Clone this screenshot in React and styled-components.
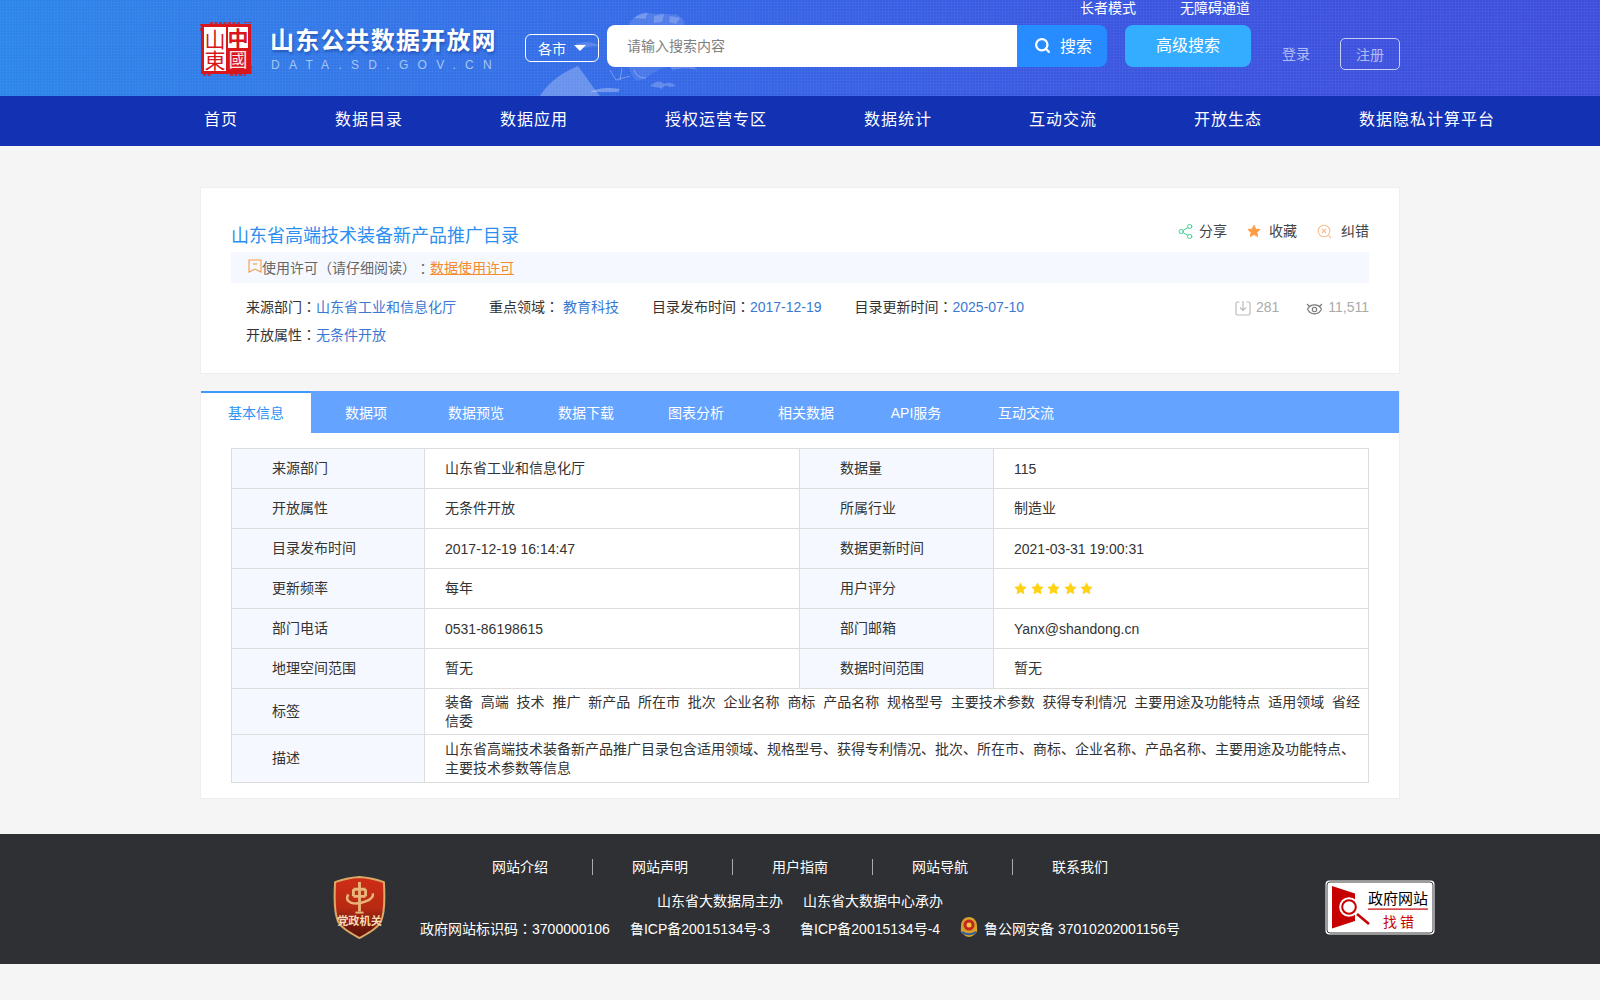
import React from "react";
import styled, { createGlobalStyle } from "styled-components";
import { Share2, Search } from "lucide-react";

const FONT = `"Liberation Sans", "Noto Sans CJK SC", sans-serif`;

const Global = createGlobalStyle`
  html, body { margin: 0; padding: 0; background: #f5f5f5; }
  body { font-family: ${FONT}; font-size: 14px; color: #333; min-height: 1000px; text-spacing-trim: space-all; }
  * { box-sizing: border-box; }
  a { text-decoration: none; color: inherit; }
`;

const Colon = styled.span`
  font-family: "Noto Sans CJK TC", sans-serif;
  line-height: 0;
`;

const HeaderShell = styled.header`
  position: relative;
  height: 96px;
  overflow: hidden;
  background-color: #3a6be6;
  background-image:
    repeating-linear-gradient(0deg, rgba(255,255,255,.035) 0 1px, transparent 1px 3px),
    repeating-linear-gradient(90deg, rgba(255,255,255,.035) 0 1px, transparent 1px 3px),
    linear-gradient(90deg, #2c86ea 0%, #3378e8 20%, #3568e6 42%, #3b56e0 70%, #3e4edc 100%);
`;
const MapDecor = styled.svg`
  position: absolute;
  left: 530px;
  top: 0;
  width: 240px;
  height: 96px;
`;
const Wrap = styled.div`
  position: relative;
  width: 1200px;
  margin: 0 auto;
`;
const TopLinks = styled.div`
  display: flex;
  justify-content: flex-end;
  gap: 44px;
  padding-right: 150px;
  height: 16px;
  line-height: 16px;
  color: #fff;
  font-size: 14px;
`;
const MainRow = styled.div`
  display: flex;
  align-items: flex-start;
  height: 80px;
  & > * { flex-shrink: 0; }
`;
const Logo = styled.div`
  display: flex;
  width: 325px;
  margin-top: 6px;
`;
const LogoText = styled.div`
  margin-left: 18px;
  margin-top: 4px;
`;
const LogoTitle = styled.div`
  font-size: 24px;
  font-weight: 700;
  line-height: 30px;
  letter-spacing: 1.2px;
  color: #fff;
  white-space: nowrap;
  text-shadow: 1px 2px 3px rgba(10,40,120,.45);
`;
const LogoSub = styled.div`
  font-size: 12px;
  line-height: 14px;
  margin: 2px 0 0 1px;
  letter-spacing: 9.3px;
  color: #a8c6f2;
  white-space: nowrap;
`;
const CityButton = styled.button`
  display: flex;
  align-items: center;
  justify-content: space-between;
  width: 74px;
  height: 28px;
  margin-top: 18px;
  padding: 0 12px 0 12px;
  background: transparent;
  border: 1px solid #fff;
  border-radius: 6px;
  color: #fff;
  font: 14px ${FONT};
`;
const Caret = styled.span`
  width: 0;
  height: 0;
  border-left: 6px solid transparent;
  border-right: 6px solid transparent;
  border-top: 6px solid #fff;
`;
const SearchBox = styled.div`
  display: flex;
  margin: 9px 0 0 8px;
  height: 42px;
`;
const SearchInput = styled.input`
  width: 410px;
  height: 42px;
  padding: 0 20px;
  border: 0;
  outline: 0;
  border-radius: 8px 0 0 8px;
  background: #fff;
  font: 14px ${FONT};
  &::placeholder { color: #808080; opacity: 1; }
`;
const SearchButton = styled.button`
  display: flex;
  align-items: center;
  gap: 9px;
  width: 90px;
  height: 42px;
  padding: 0 0 2px 17px;
  border: 0;
  border-radius: 0 8px 8px 0;
  background: #268cff;
  color: #fff;
  font: 16px ${FONT};
`;
const AdvancedButton = styled.button`
  width: 126px;
  height: 42px;
  margin: 9px 0 0 18px;
  padding: 0 0 5px;
  border: 0;
  border-radius: 8px;
  background: #33adff;
  color: #fff;
  font: 16px ${FONT};
`;
const LoginLink = styled.a`
  margin: 30px 0 0 31px;
  line-height: 16px;
  white-space: nowrap;
  color: rgba(255,255,255,.62);
`;
const RegisterLink = styled.a`
  display: flex;
  align-items: center;
  justify-content: center;
  width: 60px;
  height: 32px;
  margin: 22px 0 0 30px;
  border: 1px solid rgba(255,255,255,.7);
  border-radius: 5px;
  color: rgba(255,255,255,.62);
`;

const Nav = styled.nav`
  height: 50px;
  background: #1231b3;
`;
const NavList = styled.div`
  display: flex;
  width: 1200px;
  margin: 0 auto;
  padding-left: 4px;
  gap: 97px;
  line-height: 48px;
  font-size: 16px;
  letter-spacing: 1px;
  color: #fff;
  white-space: nowrap;
`;

const Card = styled.section`
  width: 1200px;
  margin: 0 auto;
  background: #fff;
  border: 1px solid #eee;
`;
const SummaryCard = styled(Card)`
  margin-top: 41px;
  height: 187px;
  padding: 33px 30px 0;
`;
const TitleRow = styled.div`
  display: flex;
  justify-content: space-between;
  align-items: flex-start;
  height: 31px;
`;
const Title = styled.h1`
  margin: 0;
  font-size: 18px;
  font-weight: 400;
  line-height: 30px;
  color: #2b8ff0;
`;
const Actions = styled.div`
  display: flex;
  gap: 20px;
  height: 20px;
  line-height: 20px;
  color: #444;
`;
const Action = styled.span`
  display: flex;
  align-items: center;
  gap: ${p => p.$gap || 7}px;
`;
const LicenseBar = styled.div`
  display: flex;
  align-items: center;
  height: 31px;
  line-height: 28px;
  padding-left: 17px;
  background: #f5f9ff;
  color: #666;
`;
const LicenseLink = styled.a`
  color: #f58a2e;
  text-decoration: underline;
`;
const MetaRows = styled.div`
  position: relative;
  margin-top: 10px;
  padding-left: 15px;
`;
const MetaRow = styled.div`
  display: flex;
  line-height: 28px;
  color: #333;
`;
const MetaItem = styled.span`
  margin-right: 33px;
  white-space: pre;
`;
const MetaValue = styled.a`
  color: #3b78d3;
`;
const Stats = styled.div`
  display: flex;
  gap: 27px;
  margin-left: auto;
  color: #aaa;
`;
const Stat = styled.span`
  display: flex;
  align-items: center;
  gap: ${p => p.$gap}px;
`;

const DetailCard = styled(Card)`
  margin-top: 17px;
  padding-bottom: 15px;
  border-top: 0;
`;
const TabBar = styled.div`
  display: flex;
  height: 42px;
  background: #64a3ff;
`;
const Tab = styled.a`
  width: 110px;
  text-align: center;
  color: ${p => (p.$active ? "#2d93f5" : "#fff")};
  background: ${p => (p.$active ? "#fff" : "transparent")};
  border-top: 2px solid ${p => (p.$active ? "#3d9bff" : "transparent")};
  line-height: 40px;
`;
const InfoTable = styled.table`
  width: 1137px;
  margin: 15px 0 0 30px;
  border-collapse: collapse;
  table-layout: fixed;
  color: #333;
  line-height: 18.4px;
`;
const Th = styled.th`
  height: ${p => p.$h || 40}px;
  padding: 0 0 0 40px;
  border: 1px solid #ddd;
  background: #f5f9ff;
  font-weight: 400;
  text-align: left;
`;
const Td = styled.td`
  height: ${p => p.$h || 40}px;
  padding: ${p => (p.$latin ? 2 : 0)}px ${p => p.$pr || 20}px 0 20px;
  border: 1px solid #ddd;
`;
const TagWord = styled.span`
  display: ${p => (p.$breakable ? "inline" : "inline-block")};
  margin-right: 7.8px;
`;
const Stars = styled.div`
  display: flex;
  gap: 3.6px;
  align-items: center;
`;

const Footer = styled.footer`
  display: grid;
  grid-template-columns: 1fr auto 1fr;
  height: 130px;
  margin-top: 35px;
  background: #2e3034;
  color: #fff;
`;
const PartyBadge = styled.svg`
  justify-self: end;
  margin: 42px 34px 0 0;
`;
const ErrorBadge = styled.svg`
  justify-self: start;
  margin: 46px 0 0 145px;
`;
const FooterCenter = styled.div`
  padding-top: 25px;
  text-align: center;
`;
const FooterLinks = styled.div`
  display: flex;
  justify-content: center;
  line-height: 16px;
  height: 16px;
`;
const FooterLink = styled.a`
  padding: 0 ${p => (p.$last ? 39 : 44)}px 0 39px;
  border-right: ${p => (p.$last ? "0" : "1px solid #aaa")};
`;
const FooterLine = styled.div`
  display: flex;
  justify-content: center;
  align-items: center;
  gap: ${p => p.$gap}px;
  margin-top: ${p => p.$mt}px;
  line-height: 20px;
  height: 20px;
  white-space: nowrap;
`;
const Recordal = styled.span`
  display: flex;
  align-items: center;
  gap: 6px;
  margin-left: ${p => p.$ml || 0}px;
`;

const Seal = () => (
  <svg width="52" height="54" viewBox="0 0 52 54">
    <rect x="1" y="2" width="50" height="50" fill="#d8161b" />
    <path d="M0 3h6M44 0h8M1 6v4M51 44v8M3 53h8M30 53h16M10 1h30" stroke="#d8161b" strokeWidth="1.4" strokeDasharray="3 1.5" fill="none" />
    <rect x="4" y="5" width="22" height="44" fill="#fff" />
    <rect x="28" y="5" width="20" height="21" fill="#fff" />
    <text x="15" y="25" fontSize="21" textAnchor="middle" fill="#d8161b" fontFamily={FONT}>山</text>
    <text x="15" y="46" fontSize="21" textAnchor="middle" fill="#d8161b" fontFamily={FONT}>東</text>
    <text x="38" y="24" fontSize="21" fontWeight="700" textAnchor="middle" fill="#d8161b" fontFamily={FONT}>中</text>
    <text x="38" y="45" fontSize="19" textAnchor="middle" fill="#ffe3e0" fontFamily={FONT}>國</text>
  </svg>
);

const MapArt = () => (
  <MapDecor viewBox="0 0 240 96">
    <g fill="#fff">
      <path opacity=".13" d="M100 22c6-8 18-10 26-8 8-2 14 2 20 0 5 3 10 6 8 12-6 4-8 8-16 8-4 5-12 4-16 0-6 2-14 2-20-2-3-3-4-7-2-10z" />
      <path opacity=".2" d="M104 18c4-4 10-6 14-5l-3 6zM124 16l10-2-2 8-8 1zM140 16l10 2-4 6-7-2z" />
      <path opacity=".1" d="M88 40c14-4 28 2 42 0 10 6 16 12 12 22-4 8-10 4-16 10-8 2-10 10-20 8-8-6-4-14-12-18-6-6-10-14-6-22z" />
      <path opacity=".26" d="M10 96c6-10 18-22 38-30 6 8 14 20 22 30z" />
      <path opacity=".3" d="M60 92c8-4 16-5 30-3l-2 3z" />
      <path opacity=".22" d="M120 86c6-5 10-6 14-2 4-2 8-2 12 2l-6 1c-4-2-6-2-8 2-4-2-8-2-12-3z" />
      <path opacity=".2" d="M140 66c10-3 20-3 28 4-8-2-18-2-26 0z" />
      <path opacity=".18" d="M46 44c10-3 18-2 24 2-8 0-16 1-22 4z" />
    </g>
    <path d="M80 70l6 10 14-4M92 68l-2 12M104 70c2 6 6 8 12 8" stroke="#fff" strokeOpacity=".3" strokeWidth="1" fill="none" />
  </MapDecor>
);

const BookmarkIcon = () => (
  <svg width="14" height="14" viewBox="0 0 14 14" fill="none" stroke="#f59a4a" strokeWidth="1.1" style={{ marginTop: -3 }}>
    <path d="M1 1h12v12l-6-3-6 3z" />
    <path d="M5 5h4" />
  </svg>
);
const StarIcon = ({ size = 14, color = "#ff9d47" }) => (
  <svg width={size} height={size} viewBox="0 0 24 24" fill={color} stroke={color} strokeWidth="2" strokeLinejoin="round">
    <path d="M12 2.5l2.9 6.3 6.8.8-5 4.7 1.3 6.8-6-3.4-6 3.4 1.3-6.8-5-4.7 6.8-.8z" />
  </svg>
);
const ReportIcon = () => (
  <svg width="15" height="15" viewBox="0 0 15 15" fill="none" stroke="#f8bd8e" strokeWidth="1.1">
    <circle cx="7" cy="7" r="5.8" />
    <path d="M5 5l4 4M9 5l-4 4M11.4 11.4L14 14" />
  </svg>
);
const DownloadIcon = () => (
  <svg width="16" height="16" viewBox="0 0 16 16" fill="none" stroke="#bbb" strokeWidth="1.2" style={{ marginTop: 2 }}>
    <path d="M4.5 2H2.5A1.5 1.5 0 0 0 1 3.500V13.500A1.500 1.500 0 0 0 2.500 15H13.500A1.500 1.500 0 0 0 15 13.500V3.500A1.500 1.500 0 0 0 13.500 2H11.500" />
    <path d="M8 1v9M5 7.500L8 10.500 11 7.500" />
  </svg>
);
const EyeIcon = () => (
  <svg width="17" height="16" viewBox="0 0 17 16" fill="none" stroke="#777" strokeWidth="1.1" style={{ marginTop: 2 }}>
    <path d="M1.500 9c3-5.500 11-5.500 14 0-3 6.500-11 6.500-14 0z" />
    <circle cx="8.500" cy="9.500" r="2.200" />
    <path d="M1 4l2.500 2.500M16 4l-2.500 2.500" />
  </svg>
);

const PartyShield = () => (
  <PartyBadge width="53" height="63" viewBox="0 0 52 62">
    <defs>
      <linearGradient id="shield" x1="0" y1="0" x2="0" y2="1">
        <stop offset="0" stopColor="#cf2d17" />
        <stop offset=".5" stopColor="#b82a12" />
        <stop offset=".78" stopColor="#7a1a0e" />
        <stop offset="1" stopColor="#5a130a" />
      </linearGradient>
    </defs>
    <path d="M2 6C10 3 18 1.500 26 1c8 .5 16 2 24 5 1 16 1 30-3 39-4 7-12 11-21 16-9-5-17-9-21-16C1 36 1 22 2 6z" fill="url(#shield)" stroke="#dca868" strokeWidth="2" />
    <g fill="none" stroke="#e8b67a" strokeWidth="2.8">
      <path d="M26 6v29M20 13h12M20 20h12M20 13v7M32 13v7" />
      <path d="M15 18c-5 9 7 11 17 7 5-2 8-5 7-8" strokeWidth="2.4" />
      <path d="M22 36h8" strokeWidth="2" />
    </g>
    <text x="26" y="48" fontSize="11" fontWeight="700" textAnchor="middle" fill="#f6dcb8" fontFamily={FONT}>党政机关</text>
  </PartyBadge>
);

const ErrorMark = () => (
  <ErrorBadge width="110" height="55" viewBox="0 0 110 55">
    <rect x=".5" y=".5" width="109" height="54" rx="4" fill="#fff" />
    <rect x="2" y="2" width="106" height="51" rx="3" fill="#fff" stroke="#3a3a3a" strokeWidth="1" />
    <path d="M7 6l23 7.500v27.500l-23 7.500z" fill="#c60000" />
    <circle cx="24" cy="27" r="9.800" fill="#fff" />
    <circle cx="24" cy="27" r="7.800" fill="#c60000" />
    <circle cx="24" cy="27" r="5.800" fill="#fff" />
    <path d="M31 33l12 10.500" stroke="#fff" strokeWidth="4.500" />
    <path d="M32 34l12 10" stroke="#c60000" strokeWidth="2.500" />
    <text x="43" y="24" fontSize="15" fill="#000" fontFamily={FONT}>政府网站</text>
    <rect x="43" y="28.500" width="60" height="1.200" fill="#c60000" />
    <text x="58" y="47" fontSize="14" letterSpacing="3" fill="#c60000" fontFamily={FONT}>找错</text>
  </ErrorBadge>
);

const PoliceEmblem = () => (
  <svg width="18" height="20" viewBox="0 0 18 20" style={{ marginTop: -4 }}>
    <path d="M9 0c5 0 8 4 8 9 0 3 1 6-2 8-2 2-4 3-6 3s-4-1-6-3C0 15 1 12 1 9c0-5 3-9 8-9z" fill="#d4a12a" />
    <circle cx="9" cy="8" r="5.500" fill="#c3271d" />
    <circle cx="9" cy="8" r="2.500" fill="#f1c542" />
    <path d="M2 15c4 3 10 3 14 0" stroke="#2b59a8" strokeWidth="2" fill="none" />
  </svg>
);

const navItems = ["首页", "数据目录", "数据应用", "授权运营专区", "数据统计", "互动交流", "开放生态", "数据隐私计算平台"];
const tabs = ["基本信息", "数据项", "数据预览", "数据下载", "图表分析", "相关数据", "API服务", "互动交流"];
const tags = ["装备", "高端", "技术", "推广", "新产品", "所在市", "批次", "企业名称", "商标", "产品名称", "规格型号", "主要技术参数", "获得专利情况", "主要用途及功能特点", "适用领域", "省经信委"];
const rows = [
  ["来源部门", "山东省工业和信息化厅", "数据量", "115"],
  ["开放属性", "无条件开放", "所属行业", "制造业"],
  ["目录发布时间", "2017-12-19 16:14:47", "数据更新时间", "2021-03-31 19:00:31"],
  ["更新频率", "每年", "用户评分", null],
  ["部门电话", "0531-86198615", "部门邮箱", "Yanx@shandong.cn"],
  ["地理空间范围", "暂无", "数据时间范围", "暂无"],
];
const isLatin = v => v != null && /^[\x00-\x7f]+$/.test(v);

export default function App() {
  return (
    <>
      <Global />
      <HeaderShell>
        <MapArt />
        <Wrap>
          <TopLinks>
            <a>长者模式</a>
            <a>无障碍通道</a>
          </TopLinks>
          <MainRow>
            <Logo>
              <Seal />
              <LogoText>
                <LogoTitle>山东公共数据开放网</LogoTitle>
                <LogoSub>DATA.SD.GOV.CN</LogoSub>
              </LogoText>
            </Logo>
            <CityButton>各市<Caret /></CityButton>
            <SearchBox>
              <SearchInput placeholder="请输入搜索内容" />
              <SearchButton><Search size={17} strokeWidth={3.2} />搜索</SearchButton>
            </SearchBox>
            <AdvancedButton>高级搜索</AdvancedButton>
            <LoginLink>登录</LoginLink>
            <RegisterLink>注册</RegisterLink>
          </MainRow>
        </Wrap>
      </HeaderShell>
      <Nav>
        <NavList>
          {navItems.map(n => <a key={n}>{n}</a>)}
        </NavList>
      </Nav>

      <SummaryCard>
        <TitleRow>
          <Title>山东省高端技术装备新产品推广目录</Title>
          <Actions>
            <Action $gap={5}><Share2 size={17} color="#45d08e" strokeWidth={1.4} />分享</Action>
            <Action $gap={8}><StarIcon />收藏</Action>
            <Action $gap={9}><ReportIcon />纠错</Action>
          </Actions>
        </TitleRow>
        <LicenseBar>
          <BookmarkIcon />使用许可（请仔细阅读）<Colon>：</Colon><LicenseLink>数据使用许可</LicenseLink>
        </LicenseBar>
        <MetaRows>
          <MetaRow>
            <MetaItem>来源部门<Colon>：</Colon><MetaValue>山东省工业和信息化厅</MetaValue></MetaItem>
            <MetaItem>重点领域<Colon>：</Colon> <MetaValue>教育科技</MetaValue></MetaItem>
            <MetaItem>目录发布时间<Colon>：</Colon><MetaValue>2017-12-19</MetaValue></MetaItem>
            <MetaItem>目录更新时间<Colon>：</Colon><MetaValue>2025-07-10</MetaValue></MetaItem>
            <Stats>
              <Stat $gap={5}><DownloadIcon />281</Stat>
              <Stat $gap={5}><EyeIcon />11,511</Stat>
            </Stats>
          </MetaRow>
          <MetaRow>
            <MetaItem>开放属性<Colon>：</Colon><MetaValue>无条件开放</MetaValue></MetaItem>
          </MetaRow>
        </MetaRows>
      </SummaryCard>

      <DetailCard>
        <TabBar>
          {tabs.map((t, i) => <Tab key={t} $active={i === 0}>{t}</Tab>)}
        </TabBar>
        <InfoTable>
          <colgroup>
            <col width="193" /><col width="375" /><col width="194" /><col width="375" />
          </colgroup>
          <tbody>
            {rows.map(r => (
              <tr key={r[0]}>
                <Th>{r[0]}</Th>
                <Td $latin={isLatin(r[1])}>{r[1]}</Td>
                <Th>{r[2]}</Th>
                <Td $latin={isLatin(r[3])}>
                  {r[3] ?? (
                    <Stars>
                      {[0, 1, 2, 3, 4].map(i => <StarIcon key={i} size={13} color="#ffd213" />)}
                    </Stars>
                  )}
                </Td>
              </tr>
            ))}
            <tr>
              <Th $h={46}>标签</Th>
              <Td $h={46} $pr={6} colSpan={3}>
                {tags.map((t, i) => <TagWord key={t} $breakable={i === tags.length - 1}>{t}</TagWord>)}
              </Td>
            </tr>
            <tr>
              <Th $h={48}>描述</Th>
              <Td $h={48} $pr={8} colSpan={3}>
                山东省高端技术装备新产品推广目录包含适用领域、规格型号、获得专利情况、批次、所在市、商标、企业名称、产品名称、主要用途及功能特点、主要技术参数等信息
              </Td>
            </tr>
          </tbody>
        </InfoTable>
      </DetailCard>

      <Footer>
        <PartyShield />
        <FooterCenter>
          <FooterLinks>
            <FooterLink>网站介绍</FooterLink>
            <FooterLink>网站声明</FooterLink>
            <FooterLink>用户指南</FooterLink>
            <FooterLink>网站导航</FooterLink>
            <FooterLink $last>联系我们</FooterLink>
          </FooterLinks>
          <FooterLine $gap={20} $mt={16}>
            <span>山东省大数据局主办</span>
            <span>山东省大数据中心承办</span>
          </FooterLine>
          <FooterLine $gap={20} $mt={8}>
            <span>政府网站标识码<Colon>：</Colon>3700000106</span>
            <span>鲁ICP备20015134号-3</span>
            <Recordal $ml={10}>鲁ICP备20015134号-4</Recordal>
            <Recordal><PoliceEmblem />鲁公网安备 37010202001156号</Recordal>
          </FooterLine>
        </FooterCenter>
        <ErrorMark />
      </Footer>
    </>
  );
}
